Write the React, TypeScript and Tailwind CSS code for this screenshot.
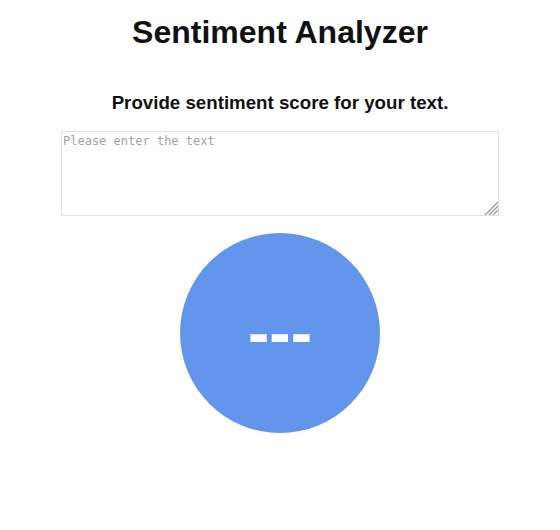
export default function App() {
  return (
    <div className="flex min-h-screen flex-col items-center bg-white font-['Liberation_Sans',Arial,sans-serif] text-[#111]">
      <h1 className="mt-[14px] text-[32px] font-bold leading-[37px]">Sentiment Analyzer</h1>
      <h3 className="mt-[41px] text-[18.72px] font-bold leading-[21px]">
        Provide sentiment score for your text.
      </h3>
      <div className="relative mt-[18px]">
        <textarea
          autoFocus
          placeholder="Please enter the text"
          className="block h-[85px] w-[438px] resize-none border border-[#e0e3e3] px-[1px] py-[1px] font-['DejaVu_Sans_Mono',monospace] text-[12px] leading-[16px] text-[#222] outline-none placeholder:text-[#a3a3a3]"
        />
        {/* resize grip */}
        <svg className="pointer-events-none absolute bottom-[1px] right-[1px]" width="15" height="15" viewBox="0 0 15 15">
          <g stroke="#9a9a9a" strokeWidth="1.3">
            <line x1="15" y1="2" x2="2" y2="15" />
            <line x1="15" y1="6" x2="6" y2="15" />
            <line x1="15" y1="10" x2="10" y2="15" />
          </g>
        </svg>
      </div>
      <div className="mt-[17px] flex h-[200px] w-[200px] items-center justify-center rounded-full bg-[#6495ed]">
        <span className="text-[64px] font-bold leading-none text-white">---</span>
      </div>
    </div>
  );
}
